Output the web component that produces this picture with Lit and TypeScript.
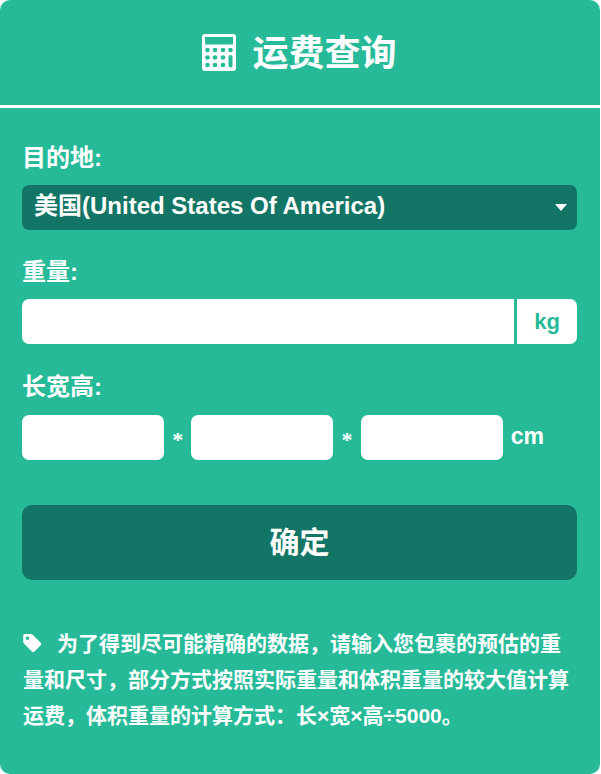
import { LitElement, html, svg, css } from "lit";
import { customElement } from "lit/decorators.js";

@customElement("app-root")
export class AppRoot extends LitElement {
  static styles = css`
    :host {
      display: block;
      background: #fff;
      font-family: "Liberation Sans", "Noto Sans CJK SC", sans-serif;
      font-weight: 700;
      color: #fff;
    }
    .card {
      background: #27ba99;
      border-radius: 10px;
      height: 774px;
      width: 600px;
      box-sizing: border-box;
      overflow: hidden;
    }
    .head {
      height: 105px;
      border-bottom: 3px solid #fff;
      display: flex;
      align-items: center;
      justify-content: center;
      gap: 16px;
      padding-right: 1px;
      font-size: 36px;
      line-height: 1;
    }
    .head span { display: block; margin-top: 2px; }
    .head svg { display: block; width: 34px; height: 37px; }
    .body { padding: 0 23px 0 22px; }
    .label { font-size: 24px; line-height: 30px; height: 30px; }
    .l1 { margin-top: 35px; margin-bottom: -1px; }
    .l2 { margin-top: 27px; }
    .l3 { margin-top: 28px; }
    .select {
      margin-top: 13px;
      height: 45px;
      background: #137565;
      border-radius: 7px;
      display: flex;
      align-items: center;
      justify-content: space-between;
      padding: 0 10px 0 12px;
      font-size: 24px;
      line-height: 1;
    }
    .select span { display: block; margin-top: -3px; }
    .arrow {
      width: 0;
      height: 0;
      border-left: 6px solid transparent;
      border-right: 6px solid transparent;
      border-top: 7px solid #fff;
    }
    .row { display: flex; margin-top: 12px; height: 45px; align-items: center; }
    .input { background: #fff; height: 45px; border-radius: 7px; }
    .weight { flex: 1; border-radius: 7px 0 0 7px; }
    .unit {
      width: 60px;
      margin-left: 3px;
      height: 45px;
      background: #fff;
      border-radius: 0 7px 7px 0;
      color: #27ba99;
      font-size: 22px;
      display: flex;
      align-items: center;
      justify-content: center;
    }
    .dims { margin-top: 13px; }
    .dim { width: 142px; }
    .gap { width: 27.4px; text-align: center; font-family: "Liberation Serif", serif; font-size: 22px; padding-top: 4px; }
    .cm { margin: -2px 0 0 8px; font-size: 23px; }
    .btn {
      margin-top: 45px;
      height: 75px;
      background: #137565;
      border-radius: 10px;
      display: flex;
      align-items: center;
      justify-content: center;
      font-size: 30px;
      line-height: 1;
    }
    .btn span { display: block; }
    .note { margin-top: 46px; padding-left: 1px; font-size: 21px; line-height: 36px; }
    .note svg { width: 19px; height: 19px; vertical-align: -2px; margin-right: 15px; }
  `;

  render() {
    return html`
      <div class="card">
        <div class="head">
          <svg viewBox="0 0 34 37">
            <rect width="34" height="37" rx="3" fill="#fff"></rect>
            <rect x="3" y="3" width="28" height="7.5" fill="#27ba99"></rect>
            ${[16, 23.5, 31].map((y) =>
              [5.5, 13, 21, 28.5].map((x) =>
                x === 28.5 && y !== 16
                  ? null
                  : svg`<circle cx=${x} cy=${y} r="2.3" fill="#27ba99"></circle>`
              )
            )}
            <rect x="26.5" y="21" width="4" height="12.5" rx="2" fill="#27ba99"></rect>
          </svg>
          <span>运费查询</span>
        </div>
        <div class="body">
          <div class="label l1">目的地:</div>
          <div class="select"><span>美国(United States Of America)</span><i class="arrow"></i></div>
          <div class="label l2">重量:</div>
          <div class="row">
            <div class="input weight"></div>
            <div class="unit">kg</div>
          </div>
          <div class="label l3">长宽高:</div>
          <div class="row dims">
            <div class="input dim"></div>
            <span class="gap">*</span>
            <div class="input dim"></div>
            <span class="gap">*</span>
            <div class="input dim"></div>
            <span class="cm">cm</span>
          </div>
          <div class="btn"><span>确定</span></div>
          <div class="note">
            <svg viewBox="0 0 19 19"><path fill="#fff" fill-rule="evenodd" d="M1.5 0h6.5q1 0 1.7.7l8 8q1.3 1.3 0 2.6l-6.2 6.2q-1.3 1.3-2.6 0l-8-8Q.2 8.8.2 8V1.5Q.2 0 1.5 0zM4.5 2.5a1.800 1.800 0 1 0 0 3.600 1.800 1.800 0 0 0 0-3.600z"></path></svg>为了得到尽可能精确的数据，请输入您包裹的预估的重量和尺寸，部分方式按照实际重量和体积重量的较大值计算运费，体积重量的计算方式：长×宽×高÷5000。
          </div>
        </div>
      </div>
    `;
  }
}
